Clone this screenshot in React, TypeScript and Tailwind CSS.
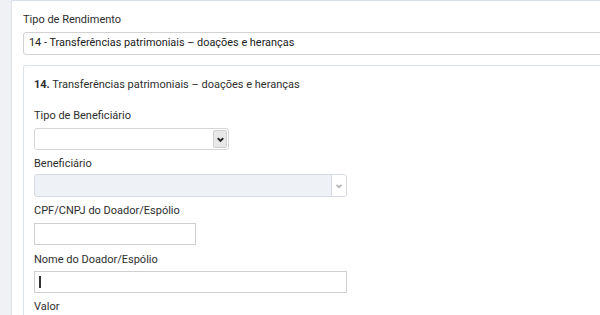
import React from 'react';

const Chevron = ({ className }: { className?: string }) => (
  <svg viewBox="0 0 10 10" className={className} fill="none" stroke="currentColor" strokeWidth="2.2">
    <path d="M2 3.5 L5 6.5 L8 3.5" />
  </svg>
);

const Label = ({ children, className = '' }: { children: React.ReactNode; className?: string }) => (
  <div className={`text-[11px] leading-[17px] text-[#2e2e2e] ${className}`}>{children}</div>
);

export default function App() {
  return (
    <div
      className="w-[600px] h-[315px] overflow-hidden flex bg-[#eef1f4]"
      style={{ fontFamily: 'Roboto, "Liberation Sans", sans-serif' }}
    >
      <div className="w-[12px] shrink-0 bg-[#eff1f4] border-r border-[#dfe4ea]" />
      <div className="flex-1 bg-white border-t border-[#d5e0ec] pl-[11px] pt-[10px] flex flex-col">
        <Label className="text-[11.4px]">Tipo de Rendimento</Label>
        <div className="mt-[4px] -mr-[10px] h-[24px] border border-[#d2d2d2] rounded-l-[3px] flex items-center pl-[5px] text-[10.9px] text-[#222]">
          14 - Transferências patrimoniais – doações e heranças
        </div>

        <div className="mt-[10px] -mr-[10px] flex-1 border-t border-l border-[#dde3ea] rounded-tl-[3px] pl-[10px] pt-[10px] flex flex-col">
          <Label className="text-[11.8px]">
            <span className="font-bold">14.</span> Transferências patrimoniais – doações e heranças
          </Label>

          <Label className="mt-[14px]">Tipo de Beneficiário</Label>
          <div className="mt-[4px] w-[195px] h-[22px] border border-[#d6d6d6] rounded-[3px] flex items-center justify-end pr-[1px]">
            <div className="w-[14px] h-[18px] bg-[#e8e8e8] border border-[#d0d0d0] rounded-[2px] flex items-center justify-center text-[#222]">
              <Chevron className="w-[9px] h-[9px]" />
            </div>
          </div>

          <Label className="mt-[5px]">Beneficiário</Label>
          <div className="mt-[2px] w-[313px] h-[23px] border border-[#d6dbe1] rounded-[3px] bg-[#eef2f7] flex justify-end overflow-hidden">
            <div className="w-[15px] bg-white border-l border-[#d6dbe1] flex items-center justify-center text-[#b5b5b5]">
              <Chevron className="w-[8px] h-[8px]" />
            </div>
          </div>

          <Label className="mt-[5px] text-[11.2px]">CPF/CNPJ do Doador/Espólio</Label>
          <div className="mt-[4px] w-[162px] h-[22px] border border-[#cfcfcf]" />

          <Label className="mt-[6px]">Nome do Doador/Espólio</Label>
          <div className="mt-[3px] w-[313px] h-[22px] border border-[#cfcfcf] flex items-center pl-[4px]">
            <div className="w-[2px] h-[12px] bg-[#333]" />
          </div>

          <Label className="mt-[5px]">Valor</Label>
        </div>
      </div>
    </div>
  );
}
